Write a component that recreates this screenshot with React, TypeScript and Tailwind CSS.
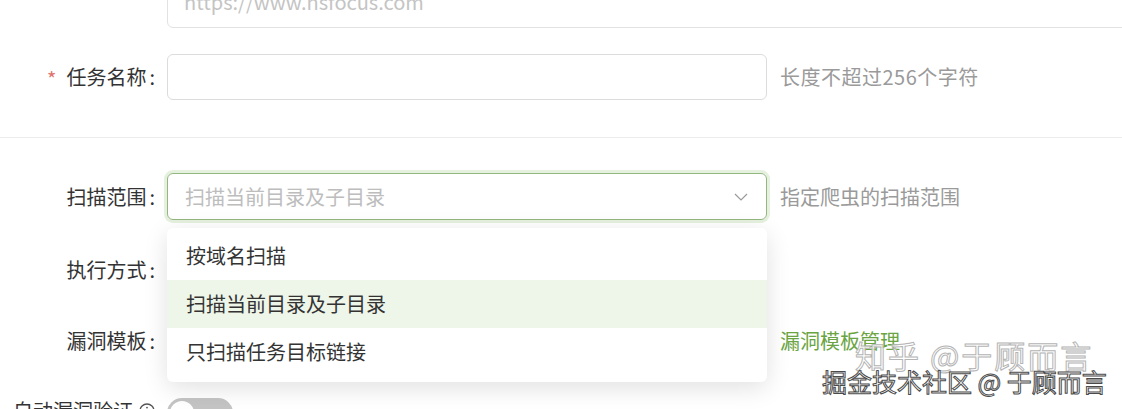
import React from "react";

const font = { fontFamily: '"Noto Sans CJK SC", "Noto Sans", sans-serif' };

function Label({ children, required }: { children: React.ReactNode; required?: boolean }) {
  return (
    <div className="w-[155px] shrink-0 flex items-center justify-end text-[20px] text-[#333]">
      {required && <span className="text-[#e0736b] text-[20px] mr-[10px] mt-[3px]">*</span>}
      <span>{children}</span>
      <span className="ml-[3px]">:</span>
    </div>
  );
}

function Chevron() {
  return (
    <svg width="14" height="8" viewBox="0 0 14 8" fill="none">
      <polyline points="1,1 7,7 13,1" stroke="#9a9a9a" strokeWidth="1.2" />
    </svg>
  );
}

const options = ["按域名扫描", "扫描当前目录及子目录", "只扫描任务目标链接"];

export default function App() {
  return (
    <div className="relative w-[1122px] h-[409px] overflow-hidden bg-white" style={font}>
      {/* URL input (cut off at top) */}
      <div className="flex -mt-[24px]">
        <div className="w-[167px] shrink-0" />
        <div className="h-[52px] w-[1100px] shrink-0 rounded-[6px] border border-[#e2e2e2] flex items-center px-[16px] text-[20px] text-[#c4c4c4]">
          https://www.nsfocus.com
        </div>
      </div>

      {/* 任务名称 */}
      <div className="flex items-center mt-[26px]">
        <Label required>任务名称</Label>
        <div className="ml-[12px] h-[46px] w-[600px] rounded-[6px] border border-[#dcdcdc]" />
        <div className="ml-[13px] text-[20px] tracking-[0.5px] text-[#9a9a9a]">长度不超过256个字符</div>
      </div>

      <div className="mt-[37px] h-px bg-[#ececec]" />

      {/* 扫描范围 */}
      <div className="flex items-center mt-[35px]">
        <Label>扫描范围</Label>
        <div className="ml-[12px] h-[47px] w-[600px] rounded-[6px] border border-[#93b77f] shadow-[0_0_0_3px_#e6f0df] flex items-center justify-between pl-[17px] pr-[18px]">
          <span className="text-[20px] text-[#bdbdbd]">扫描当前目录及子目录</span>
          <Chevron />
        </div>
        <div className="ml-[13px] text-[20px] text-[#9a9a9a]">指定爬虫的扫描范围</div>
      </div>

      {/* 执行方式 */}
      <div className="flex items-center mt-[27px] h-[46px]">
        <Label>执行方式</Label>
      </div>

      {/* 漏洞模板 */}
      <div className="flex items-center mt-[25px] h-[46px]">
        <Label>漏洞模板</Label>
        <div className="ml-[12px] w-[600px]" />
        <div className="ml-[13px] text-[20px] text-[#6aa443]">漏洞模板管理</div>
      </div>

      {/* 自动漏洞验证 */}
      <div className="flex items-center mt-[24px] h-[46px]">
        <div className="w-[155px] shrink-0 flex items-center justify-end text-[20px] text-[#333]">
          <span>自动漏洞验证</span>
          <svg className="ml-[6px]" width="16" height="16" viewBox="0 0 16 16" fill="none">
            <circle cx="8" cy="8" r="7" stroke="#555" strokeWidth="1.3" />
            <line x1="8" y1="7" x2="8" y2="12" stroke="#555" strokeWidth="1.3" />
            <circle cx="8" cy="4.6" r="0.9" fill="#555" />
          </svg>
        </div>
        <div className="ml-[12px] mt-[4px] h-[30px] w-[66px] rounded-full bg-[#c4c4c4] flex items-center px-[3px]">
          <div className="h-[24px] w-[24px] rounded-full bg-white" />
        </div>
      </div>

      {/* dropdown menu */}
      <div className="absolute left-[167px] top-[228px] w-[600px] rounded-[6px] bg-white pt-[4px] pb-[6px] shadow-[0_6px_24px_rgba(0,0,0,0.12)]">
        {options.map((o, i) => (
          <div
            key={o}
            className={
              i === 1
                ? "h-[48px] flex items-center px-[19px] text-[20px] text-[#333] bg-[#eef5e9]"
                : "h-[48px] flex items-center px-[19px] text-[20px] text-[#333]"
            }
          >
            {o}
          </div>
        ))}
      </div>

      {/* watermarks */}
      <div className="absolute left-[855px] top-[336px] text-[31px] leading-[38px] text-[rgba(255,255,255,0.8)] [-webkit-text-stroke:1px_#b4b4b4] whitespace-nowrap tracking-[2px]">
        知乎 @于顾而言
      </div>
      <div className="absolute left-[822px] top-[364px] text-[25px] leading-[34px] text-white [-webkit-text-stroke:1px_#4a4a4a] whitespace-nowrap">
        掘金技术社区 @ 于顾而言
      </div>
    </div>
  );
}
